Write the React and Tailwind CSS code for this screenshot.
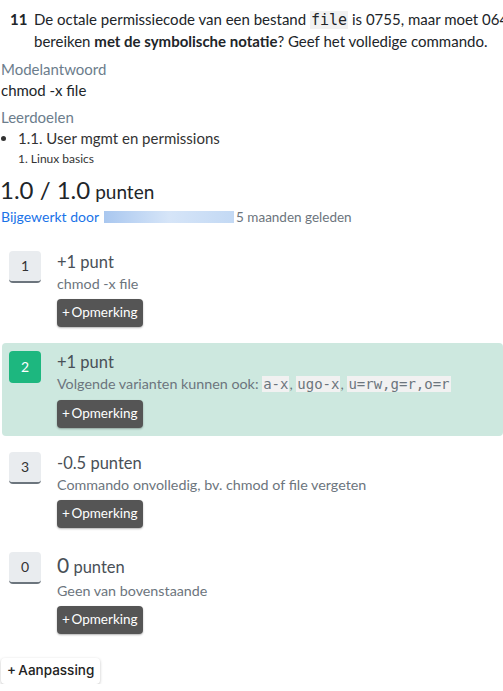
import React from 'react';

const code = 'font-["DejaVu_Sans_Mono",monospace] text-[14px] bg-[#f1f1f1] px-[1px]';

const items = [
  { key: '1', title: <>+1 punt</>, desc: <>chmod -x file</> },
  {
    key: '2',
    active: true,
    title: <>+1 punt</>,
    desc: (
      <>
        Volgende varianten kunnen ook: <code className={code}>a-x</code>, <code className={code}>ugo-x</code>,{' '}
        <code className={code}>u=rw,g=r,o=r</code>
      </>
    ),
  },
  { key: '3', title: <>-0.5 punten</>, desc: <>Commando onvolledig, bv. chmod of file vergeten</> },
  {
    key: '0',
    tall: true,
    title: (
      <>
        <span className="text-[21px]">0</span> punten
      </>
    ),
    desc: <>Geen van bovenstaande</>,
  },
];

const RubricItem = ({ item }) => (
  <div className={`flex gap-4 p-2 pl-[7px] rounded-[4px] ${item.active ? 'bg-[#cde8df]' : ''}`}>
    <div
      className={`w-8 h-8 shrink-0 flex items-center justify-center rounded-[4px] text-[14px] ${
        item.active
          ? 'bg-[#1db77f] text-white'
          : 'bg-[#e9ecef] text-[#333] border-b-2 border-[#6c757d]'
      }`}
    >
      {item.key}
    </div>
    <div className="flex flex-col items-start">
      <div className={`text-[16.5px] text-[#495057] ${item.tall ? 'leading-[26px]' : 'leading-[22px]'}`}>
        {item.title}
      </div>
      <div className="text-[14.3px] leading-[21px] text-[#6c757d]">{item.desc}</div>
      <button className="mt-[5px] h-[28px] px-[5px] rounded-[4px] bg-[#555] text-white text-[13.5px] shadow-[0_1px_2px_rgba(0,0,0,0.3)]">
        +&thinsp;Opmerking
      </button>
    </div>
  </div>
);

export default function App() {
  return (
    <div className="w-[503px] overflow-hidden font-['Lato',sans-serif] text-[#212529] text-[15px]">
      <div className="flex pt-[9px]">
        <div className="w-[34px] shrink-0 pl-[10px] font-bold leading-[21px]">11</div>
        <p className="leading-[21px] whitespace-nowrap">
          De octale permissiecode van een bestand <code className={code + ' text-[15px]'}>file</code> is 0755, maar moet 0644 worden. Hoe
          <br />
          bereiken <b>met de symbolische notatie</b>? Geef het volledige commando.
        </p>
      </div>

      <div className="mt-[7px] pl-[1px] text-[#6c7d8c] leading-[21px]">Modelantwoord</div>
      <div className="pl-[1px] leading-[20px]">chmod -x file</div>

      <div className="mt-[7px] pl-[1px] text-[#6c7d8c] leading-[21px]">Leerdoelen</div>
      <ul className="list-disc pl-[18px] text-[#333]">
        <li className="leading-[20px]">1.1. User mgmt en permissions</li>
        <li className="list-none text-[12px] leading-[21px]">1. Linux basics</li>
      </ul>

      <div className="mt-[6px] flex items-baseline gap-[5px] text-[#212529]">
        <span className="text-[24px] leading-[30px]">1.0 / 1.0</span>
        <span className="text-[19px]">punten</span>
      </div>
      <div className="flex items-center text-[13.5px] leading-[20px]">
        <span className="text-[#1a73e8] text-[14px] pl-[1px]">Bijgewerkt door</span>
        <span className="ml-[5px] w-[130px] h-[12px] bg-gradient-to-r from-[#a9c7ef] via-[#d6e5f8] to-[#c3d9f4]" />
        <span className="ml-[2px] text-[#6c757d]">5 maanden geleden</span>
      </div>

      <div className="mt-[16px] ml-[2px] flex flex-col gap-2">
        {items.map((it) => (
          <RubricItem key={it.key} item={it} />
        ))}
      </div>

      <button className="mt-[16px] ml-[1px] h-[26px] px-[6px] rounded-[4px] bg-white text-[13.5px] font-medium font-['Inter',sans-serif] text-[#222] shadow-[0_1px_3px_rgba(0,0,0,0.25)]">
        +&thinsp;Aanpassing
      </button>
    </div>
  );
}
